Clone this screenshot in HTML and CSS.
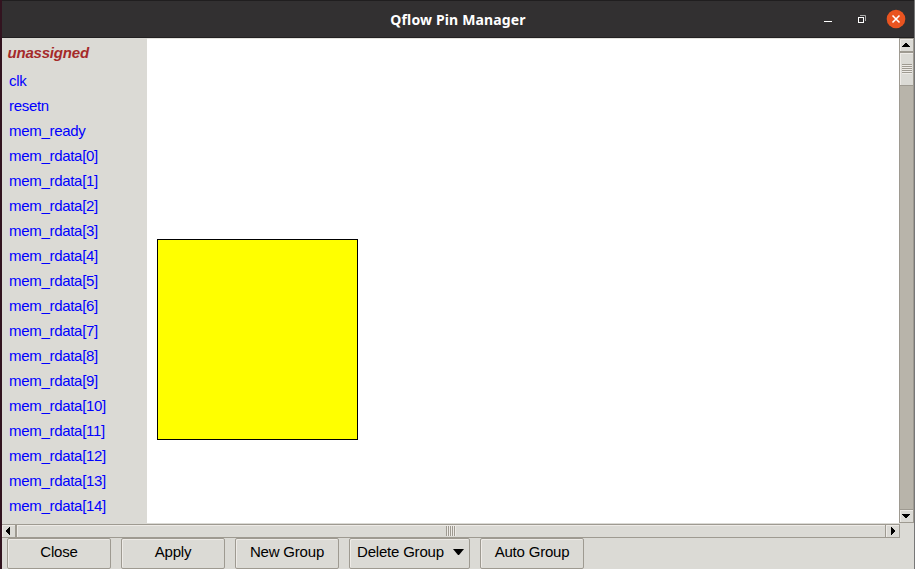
FILE: index.html
```html
<!DOCTYPE html>
<html lang="en">
<head>
<meta charset="utf-8">
<title>Qflow Pin Manager</title>
<link rel="stylesheet" href="styles.css">
</head>
<body>
<div class="window">
  <header class="titlebar">
    <h1 class="title"><span>Qflow Pin Manager</span></h1>
    <svg class="controls" width="92" height="38" viewBox="0 0 92 38">
      <path d="M2 21.5h8" stroke="#fff"/>
      <path d="M38 15.500h5.500v5.500" fill="none" stroke="#aaa"/>
      <rect x="36.500" y="17.500" width="5" height="5" fill="none" stroke="#fff"/>
      <circle cx="74" cy="19" r="9.300" fill="#e95420"/>
      <path d="M70.500 15.500l7 7m0-7l-7 7" stroke="#fff" stroke-width="1.600"/>
    </svg>
  </header>
  <main class="workspace">
    <aside class="pins">
      <h2 class="group">unassigned</h2>
      <ul class="list">
        <li>clk</li>
        <li>resetn</li>
        <li>mem_ready</li>
        <li>mem_rdata[0]</li>
        <li>mem_rdata[1]</li>
        <li>mem_rdata[2]</li>
        <li>mem_rdata[3]</li>
        <li>mem_rdata[4]</li>
        <li>mem_rdata[5]</li>
        <li>mem_rdata[6]</li>
        <li>mem_rdata[7]</li>
        <li>mem_rdata[8]</li>
        <li>mem_rdata[9]</li>
        <li>mem_rdata[10]</li>
        <li>mem_rdata[11]</li>
        <li>mem_rdata[12]</li>
        <li>mem_rdata[13]</li>
        <li>mem_rdata[14]</li>
      </ul>
    </aside>
    <section class="canvas"><div class="die"></div></section>
    <div class="vscroll">
      <div class="step"><svg width="8" height="4" viewBox="0 0 8 4" shape-rendering="crispEdges"><path d="M3 0h2v1h1v1h1v1h1v1H0V3h1V2h1V1h1z"/></svg></div>
      <div class="thumb"><i class="grip"></i></div>
      <div class="trough"></div>
      <div class="step"><svg width="8" height="4" viewBox="0 0 8 4" shape-rendering="crispEdges"><path d="M0 0h8v1H7v1H6v1H5v1H3V3H2V2H1V1H0z"/></svg></div>
    </div>
  </main>
  <div class="hscroll">
    <div class="step"><svg width="4" height="8" viewBox="0 0 4 8" shape-rendering="crispEdges"><path d="M0 3h1V2h1V1h1V0h1v8H3V7H2V6H1V5H0z"/></svg></div>
    <div class="thumb"><i class="grip"></i></div>
    <div class="step"><svg width="4" height="8" viewBox="0 0 4 8" shape-rendering="crispEdges"><path d="M0 0h1v1h1v1h1v1h1v2H3v1H2v1H1v1H0z"/></svg></div>
  </div>
  <footer class="toolbar">
    <button class="btn">Close</button>
    <button class="btn">Apply</button>
    <button class="btn">New Group</button>
    <button class="btn menu">Delete Group<svg width="11" height="6" viewBox="0 0 11 6"><path d="M0 0h11L6 6H5z"/></svg></button>
    <button class="btn">Auto Group</button>
  </footer>
</div>
</body>
</html>
```
FILE: styles.css
```css
* { box-sizing: border-box; }
body {
  margin: 0;
  overflow: hidden;
  font: 15px "Liberation Sans", sans-serif;
  background: #dbdad5;
}
.window {
  height: 569px;
  display: flex;
  flex-direction: column;
  border-left: 2px solid #32131f;
  border-right: 1px solid #777;
}
.titlebar {
  flex: 0 0 38px;
  display: flex;
  align-items: center;
  background: #323031;
  border-top: 1px solid #201e1f;
  border-bottom: 1px solid #222021;
}
.title {
  flex: 1;
  margin: 0;
  padding: 2px 0 0 92px;
  text-align: center;
  font: bold 14px/34px "Noto Sans", sans-serif;
  letter-spacing: 0.15px;
  color: #fff;
}
.controls { margin: -1px 0; flex: none; }
.workspace { flex: 0 0 485px; display: flex; }
.pins { width: 145px; overflow: hidden; }
.group {
  margin: 0;
  padding: 2px 0 0 5.500px;
  height: 30px;
  font: italic bold 15px/26px "Liberation Sans", sans-serif;
  letter-spacing: -0.2px;
  color: #a52a2a;
}
.list {
  margin: 0;
  padding: 0 0 0 7px;
  list-style: none;
  letter-spacing: -0.3px;
  color: #00f;
}
.list li { height: 25px; line-height: 26px; }
.canvas {
  flex: 1;
  padding: 200px 0 0 10px;
  background: #fff;
  border-top: 1px solid #e5e4df;
}
.die { width: 201px; height: 201px; background: #ff0; border: 1px solid #000; }
.vscroll {
  width: 15px;
  display: flex;
  flex-direction: column;
  background: #b8b4aa;
  border: solid #9e9a91;
  border-width: 0 1px;
}
.step, .thumb {
  display: flex;
  align-items: center;
  justify-content: center;
  background: #dbdad5;
  border: 1px solid #9e9a91;
  box-shadow: inset 1px 1px #eeebe7;
}
.vscroll .step { height: 14px; border-width: 1px 0; padding: 0 1px 1px 0; }
.vscroll .thumb { height: 34px; border-width: 1px 0; }
.trough { flex: 1; }
.vscroll .grip {
  width: 10px;
  height: 10px;
  background: repeating-linear-gradient(#9e9a91 0 1px, #eeebe7 1px 2px);
}
.hscroll { flex: 0 0 15px; width: 898px; display: flex; padding-top: 1px; }
.hscroll .step { width: 14px; border-width: 1px 1px 1px 0; padding-right: 1px; }
.hscroll .step:last-child { padding-right: 0; }
.hscroll .thumb { flex: 1; }
.hscroll .grip {
  width: 10px;
  height: 10px;
  background: repeating-linear-gradient(90deg, #9e9a91 0 1px, #eeebe7 1px 2px);
}
.toolbar { flex: 1; display: flex; gap: 10px; padding-left: 5px; }
.btn {
  width: 104px;
  height: 31px;
  margin: 0;
  padding: 0 0 4px;
  font: 15px "Liberation Sans", sans-serif;
  letter-spacing: -0.2px;
  color: #000;
  background: #dbdad5;
  border: 1px solid #9e9a91;
  border-radius: 2px;
  box-shadow: inset 1px 1px #eeebe7;
}
.menu {
  width: 121px;
  display: flex;
  align-items: center;
  justify-content: space-between;
  padding: 0 5px 4px 7px;
}
```
